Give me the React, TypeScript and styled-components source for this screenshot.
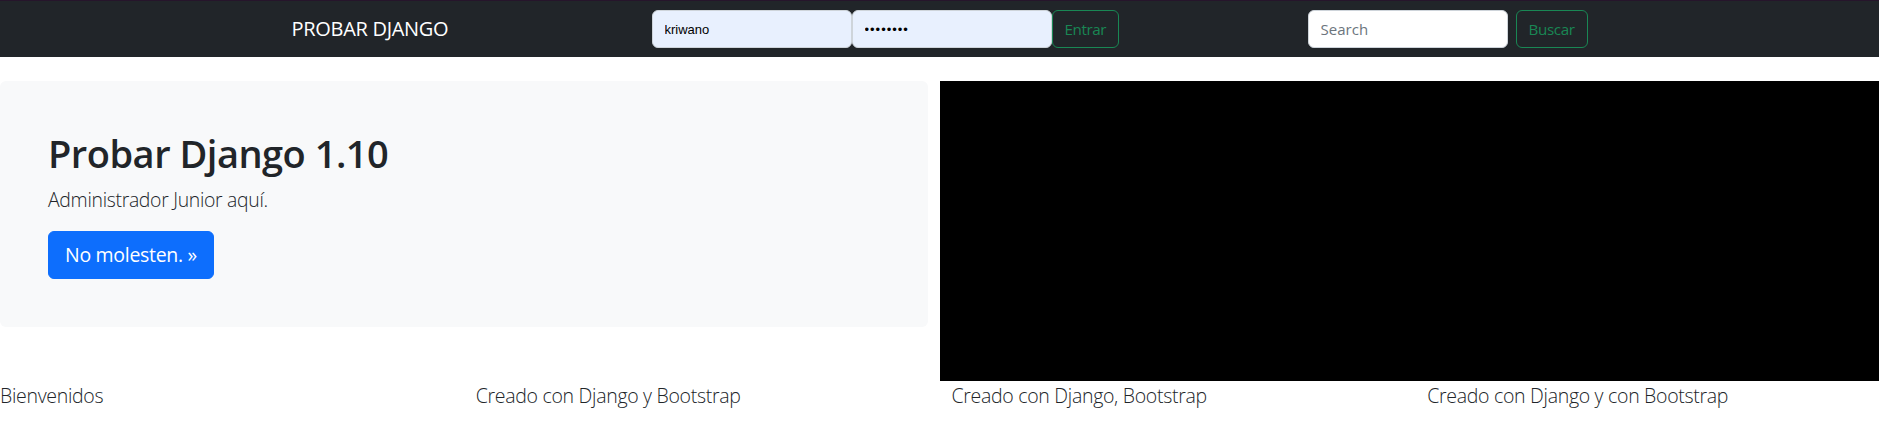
import React from "react";
import styled, { createGlobalStyle } from "styled-components";

const Global = createGlobalStyle`
  html, body { margin: 0; padding: 0; background: #fff; overflow-x: hidden; }
  body {
    font-family: "Open Sans", "Noto Sans", "Liberation Sans", sans-serif;
    color: #212529;
    font-size: 16px;
    line-height: 1.5;
  }
  * { box-sizing: border-box; }
`;

const NavBar = styled.nav`
  background: #212529;
  border-top: 1px solid #26152b;
  height: 57px;
  display: flex;
  justify-content: center;
`;

const NavInner = styled.div`
  width: 1320px;
  padding: 0 12px;
  display: flex;
  align-items: center;
`;

const Brand = styled.a`
  flex: 0 0 360px;
  color: #fff;
  font-size: 20px;
  letter-spacing: -0.3px;
  text-decoration: none;
  line-height: 30px;
`;

const Form = styled.form<{ $push?: boolean }>`
  display: flex;
  align-items: center;
  gap: ${(p) => (p.$push ? "8px" : "0")};
  margin-left: ${(p) => (p.$push ? "auto" : "0")};
`;

const Field = styled.input<{ $filled?: boolean; $mono?: boolean }>`
  width: 200px;
  height: 38px;
  border: 1px solid #ced4da;
  border-radius: 6px;
  padding: 0 12px;
  background: ${(p) => (p.$filled ? "#e8f0fe" : "#fff")};
  color: #000;
  font-family: ${(p) => (p.$filled ? '"Liberation Sans", Arial, sans-serif' : '"Open Sans", sans-serif')};
  font-size: ${(p) => (p.$filled ? "13px" : "15px")};
  letter-spacing: ${(p) => (p.$mono ? "1px" : "0")};
  outline: none;
  &::placeholder { color: #6c757d; }
`;

const OutlineButton = styled.button`
  height: 38px;
  padding: 0 12px;
  border: 1px solid #198754;
  border-radius: 6px;
  background: transparent;
  color: #198754;
  font-family: "Open Sans", sans-serif;
  font-size: 15.2px;
  letter-spacing: -0.4px;
  cursor: pointer;
`;

const Hero = styled.section`
  margin-top: 24px;
  display: grid;
  grid-template-columns: calc(50% - 11.5px) 1fr;
  column-gap: 12px;
  align-items: start;
`;

const Jumbo = styled.div`
  background: #f8f9fa;
  border-radius: 6px;
  padding: 48px;
`;

const Title = styled.h1`
  margin: 0 0 8px;
  font-size: 38px;
  font-weight: 600;
  line-height: 48px;
  letter-spacing: -0.5px;
  color: #212529;
`;

const Lead = styled.p`
  margin: 0 0 16px;
  font-size: 19.4px;
  font-weight: 300;
  line-height: 30px;
  letter-spacing: -0.3px;
  color: #212529;
`;

const PrimaryButton = styled.a`
  display: inline-flex;
  align-items: center;
  height: 48px;
  padding: 0 16px;
  background: #0d6efd;
  border: 1px solid #0d6efd;
  border-radius: 6px;
  color: #fff;
  font-size: 19.5px;
  letter-spacing: -0.3px;
  text-decoration: none;
`;

const Video = styled.div`
  height: 300px;
  background: #000;
`;

const FooterRow = styled.div`
  display: grid;
  grid-template-columns: repeat(4, 1fr);
  margin: 0 -12px;
`;

const FooterCol = styled.p`
  margin: 0;
  padding: 0 12px;
  font-size: 19.5px;
  font-weight: 300;
  line-height: 30px;
  letter-spacing: -0.3px;
  color: #212529;
`;

export default function App() {
  return (
    <>
      <Global />
      <NavBar>
        <NavInner>
          <Brand href="#">PROBAR DJANGO</Brand>
          <Form onSubmit={(e) => e.preventDefault()}>
            <Field $filled defaultValue="kriwano" />
            <Field $filled $mono type="password" defaultValue="12345678" />
            <OutlineButton type="submit">Entrar</OutlineButton>
          </Form>
          <Form $push onSubmit={(e) => e.preventDefault()}>
            <Field placeholder="Search" />
            <OutlineButton type="submit">Buscar</OutlineButton>
          </Form>
        </NavInner>
      </NavBar>
      <Hero>
        <Jumbo>
          <Title>Probar Django 1.10</Title>
          <Lead>Administrador Junior aquí.</Lead>
          <PrimaryButton href="#">No molesten. »</PrimaryButton>
        </Jumbo>
        <Video />
      </Hero>
      <FooterRow>
        <FooterCol>Bienvenidos</FooterCol>
        <FooterCol>Creado con Django y Bootstrap</FooterCol>
        <FooterCol>Creado con Django, Bootstrap</FooterCol>
        <FooterCol>Creado con Django y con Bootstrap</FooterCol>
      </FooterRow>
    </>
  );
}
